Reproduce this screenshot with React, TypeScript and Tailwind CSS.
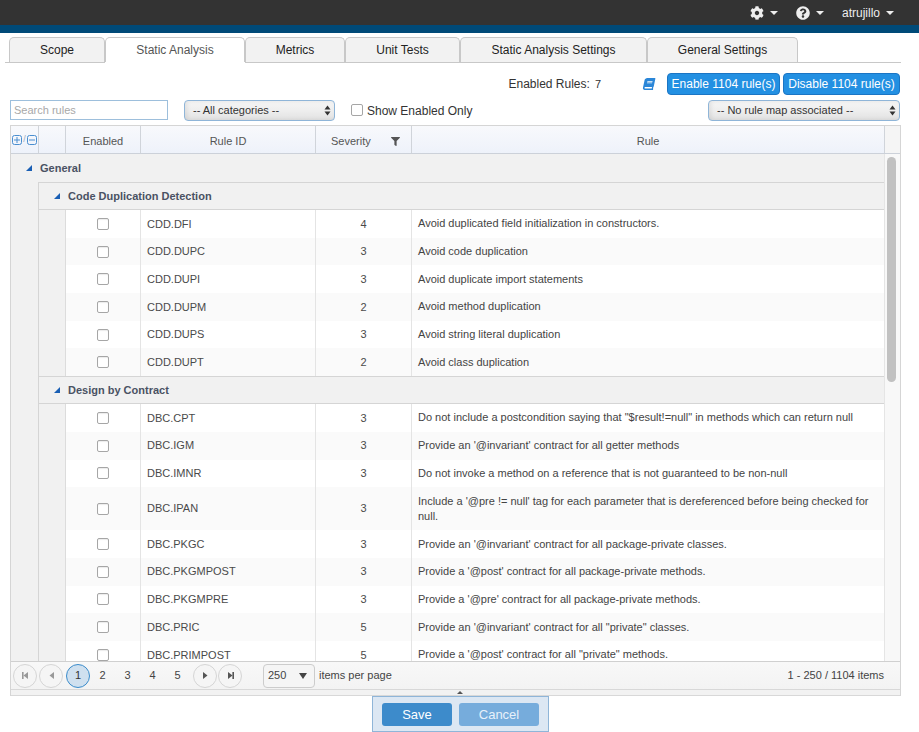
import React from "react";
import { FaCog, FaQuestionCircle, FaBook, FaFilter } from "react-icons/fa";

const tabs = [
  { t: "Scope", w: "w-[96px]" },
  { t: "Static Analysis", w: "w-[140px]", active: true },
  { t: "Metrics", w: "w-[100px]" },
  { t: "Unit Tests", w: "w-[115px]" },
  { t: "Static Analysis Settings", w: "w-[187px]" },
  { t: "General Settings", w: "w-[151px]" },
];

type R = { id: string; sev: number; text: string; h?: string };
const cdd: R[] = [
  { id: "CDD.DFI", sev: 4, text: "Avoid duplicated field initialization in constructors." },
  { id: "CDD.DUPC", sev: 3, text: "Avoid code duplication" },
  { id: "CDD.DUPI", sev: 3, text: "Avoid duplicate import statements" },
  { id: "CDD.DUPM", sev: 2, text: "Avoid method duplication" },
  { id: "CDD.DUPS", sev: 3, text: "Avoid string literal duplication" },
  { id: "CDD.DUPT", sev: 2, text: "Avoid class duplication" },
];
const dbc: R[] = [
  { id: "DBC.CPT", sev: 3, text: "Do not include a postcondition saying that \"$result!=null\" in methods which can return null" },
  { id: "DBC.IGM", sev: 3, text: "Provide an '@invariant' contract for all getter methods" },
  { id: "DBC.IMNR", sev: 3, text: "Do not invoke a method on a reference that is not guaranteed to be non-null" },
  { id: "DBC.IPAN", sev: 3, text: "Include a '@pre != null' tag for each parameter that is dereferenced before being checked for null.", h: "h-[43px]" },
  { id: "DBC.PKGC", sev: 3, text: "Provide an '@invariant' contract for all package-private classes." },
  { id: "DBC.PKGMPOST", sev: 3, text: "Provide a '@post' contract for all package-private methods." },
  { id: "DBC.PKGMPRE", sev: 3, text: "Provide a '@pre' contract for all package-private methods." },
  { id: "DBC.PRIC", sev: 5, text: "Provide an '@invariant' contract for all \"private\" classes." },
  { id: "DBC.PRIMPOST", sev: 5, text: "Provide a '@post' contract for all \"private\" methods." },
];

function Caret() {
  return <span className="ml-[6px] inline-block h-0 w-0 border-x-[4px] border-t-[4px] border-x-transparent border-t-[#eeeeee]" />;
}

function Tri() {
  return (
    <svg width="8" height="8" viewBox="0 0 8 8" className="shrink-0">
      <path d="M7 1V7H1Z" fill="#1a5fb4" />
    </svg>
  );
}

function Check() {
  return <input type="checkbox" className="h-[12px] w-[12px] appearance-none rounded-[2px] border border-[#a6a6a6] bg-white shadow-[inset_0_1px_1px_rgba(0,0,0,0.08)]" />;
}

function Row({ r, alt }: { r: R; alt: boolean }) {
  return (
    <div className={`flex ${r.h ?? "h-[27.7px]"} shrink-0 items-center text-[11px] text-[#4a4a4a] ${alt ? "bg-[#fafafa]" : "bg-white"}`}>
      <div className="flex h-full w-[75px] shrink-0 items-center justify-center border-r border-[#e4e4e4]"><Check /></div>
      <div className="flex h-full w-[175px] shrink-0 items-center border-r border-[#e4e4e4] pl-[6px]">{r.id}</div>
      <div className="flex h-full w-[96px] shrink-0 items-center justify-center border-r border-[#e4e4e4]">{r.sev}</div>
      <div className="flex h-full min-w-0 flex-1 items-center pl-[6px] pr-[7px] leading-[15px] text-[#444]">{r.text}</div>
    </div>
  );
}

function Group({ name, rows }: { name: string; rows: R[] }) {
  return (
    <div className="shrink-0">
      <div className="flex h-[28px] items-center border-t border-b border-[#d5d5d5] bg-[#f1f1f1]">
        <div className="w-[14px]" />
        <Tri />
        <span className="ml-[7px] text-[11px] font-bold text-[#4a5263]">{name}</span>
      </div>
      <div className="ml-[26px] border-l border-[#dcdcdc]">
        {rows.map((r, i) => <Row key={r.id} r={r} alt={i % 2 === 1} />)}
      </div>
    </div>
  );
}

function Sel({ label, w }: { label: string; w: string }) {
  return (
    <div className={`flex h-[21px] ${w} items-center justify-between rounded-[4px] border border-[#8fb5d8] bg-gradient-to-b from-[#f6f6f6] via-[#eeeeee] to-[#e2e2e2] pl-[8px] pr-[3px] text-[11px] text-[#333] shadow-[inset_2px_0_4px_rgba(0,0,0,0.08)]`}>
      <span>{label}</span>
      <svg width="7" height="11" viewBox="0 0 7 11"><path d="M3.5 0.5 6.5 4.5H0.5Z M3.5 10.5 0.5 6.5H6.5Z" fill="#333" /></svg>
    </div>
  );
}

function PagerBtn({ d, bar }: { d: "l" | "r"; bar?: boolean }) {
  const c = d === "l" ? "#999" : "#555";
  return (
    <div className="flex h-[24px] w-[24px] items-center justify-center rounded-full border border-[#d5d5d5] bg-[#f5f5f5]">
      <svg width="9" height="9" viewBox="0 0 9 9">
        {d === "l" ? <path d="M7 1V8L2.5 4.5Z" fill={c} /> : <path d="M2 1V8L6.5 4.5Z" fill={c} />}
        {bar && <rect x={d === "l" ? 1 : 6.4} y="1" width="1.6" height="7" fill={c} />}
      </svg>
    </div>
  );
}

export default function App() {
  return (
    <div className="h-[732px] w-[919px] overflow-hidden bg-white font-['Liberation_Sans',Arial,sans-serif] text-[#333]">
      <div className="flex h-[25px] items-center justify-end bg-[#333333] pr-[25px] text-[12px] text-[#eeeeee]">
        <FaCog className="h-[14px] w-[14px]" /><Caret />
        <FaQuestionCircle className="ml-[18px] h-[14px] w-[14px]" /><Caret />
        <span className="ml-[18px]">atrujillo</span><Caret />
      </div>
      <div className="h-[8px] bg-[#004a78]" />

      <div className="ml-[5px] mt-[4px] flex h-[26px] w-[896px] border-b border-[#c8c8c8] pl-[4px]">
        {tabs.map((t) => (
          <div
            key={t.t}
            className={`${t.w} flex h-[25px] items-center justify-center rounded-t-[5px] border border-b-0 border-[#c8c8c8] text-[12px] ${t.active ? "z-10 bg-white text-[#555] shadow-[0_1px_0_#ffffff]" : "bg-[#f2f2f2] text-[#222]"}`}
          >
            {t.t}
          </div>
        ))}
      </div>

      <div className="mt-[10px] flex h-[22px] items-center justify-end pr-[19px] text-[12px]">
        <span className="text-[#333]">Enabled Rules:</span>
        <span className="ml-[5px] text-[11px] text-[#333]">7</span>
        <FaBook className="ml-[41px] h-[12px] w-[14px] -skew-x-12 text-[#2a86d8]" />
        <div className="ml-[11px] flex h-[22px] w-[113px] items-center justify-center rounded-[4px] border border-[#1b75c4] bg-[#2390e2] text-white">Enable 1104 rule(s)</div>
        <div className="ml-[3px] flex h-[22px] w-[117px] items-center justify-center rounded-[4px] border border-[#1b75c4] bg-[#2390e2] text-white">Disable 1104 rule(s)</div>
      </div>

      <div className="mt-[5px] flex h-[21px] items-start pl-[10px] pr-[19px]">
        <input placeholder="Search rules" className="h-[20px] w-[158px] border border-[#9dbfdc] px-[3px] text-[11px] outline-none placeholder:text-[#a8a8a8]" />
        <Sel label="-- All categories --" w="ml-[16px] w-[151px]" />
        <input type="checkbox" className="ml-[16px] mt-[4px] h-[12px] w-[12px] appearance-none rounded-[2px] border border-[#a6a6a6] bg-white" />
        <span className="ml-[4px] mt-[2px] text-[12px] text-[#333]">Show Enabled Only</span>
        <Sel label="-- No rule map associated --" w="ml-auto w-[192px]" />
      </div>

      <div className="ml-[10px] mt-[4px] w-[891px] border border-b-0 border-[#d5d5d5]">
        <div className="flex h-[28px] border-b border-[#ccd1d9] bg-gradient-to-b from-[#f8f9fc] to-[#eef2fa] text-[11px] text-[#555]">
          <div className="flex w-[28px] shrink-0 items-center justify-center gap-[1px] border-r border-[#d0d4da]">
            <svg width="10" height="10" viewBox="0 0 10 10"><rect x="0.5" y="0.5" width="9" height="9" rx="2" fill="none" stroke="#4a8ecf" /><path d="M2 5H8M5 2V8" stroke="#4a8ecf" /></svg>
            <span className="text-[9px] text-[#9ab]">/</span>
            <svg width="10" height="10" viewBox="0 0 10 10"><rect x="0.5" y="0.5" width="9" height="9" rx="2" fill="none" stroke="#4a8ecf" /><path d="M2 5H8" stroke="#4a8ecf" /></svg>
          </div>
          <div className="w-[27px] shrink-0 border-r border-[#d0d4da]" />
          <div className="flex w-[75px] shrink-0 items-center justify-center border-r border-[#d0d4da] pt-[3px]">Enabled</div>
          <div className="flex w-[175px] shrink-0 items-center justify-center border-r border-[#d0d4da] pt-[3px]">Rule ID</div>
          <div className="flex w-[96px] shrink-0 items-center justify-between border-r border-[#d0d4da] pl-[15px] pr-[11px] pt-[3px]">
            <span>Severity</span>
            <FaFilter className="h-[9px] w-[9px] text-[#555]" />
          </div>
          <div className="flex flex-1 items-center justify-center border-r border-[#d0d4da] pt-[3px]">Rule</div>
          <div className="w-[15px] shrink-0 bg-[#f5f5f5]" />
        </div>

        <div className="flex h-[507px] overflow-hidden">
          <div className="min-w-0 flex-1 overflow-hidden bg-[#f1f1f1]">
            <div className="flex h-[28px] items-center pl-[14px] text-[11px] font-bold text-[#4a5263]">
              <Tri />
              <span className="ml-[7px]">General</span>
            </div>
            <div className="ml-[27px] flex flex-col border-l border-[#d5d5d5]">
              <Group name="Code Duplication Detection" rows={cdd} />
              <Group name="Design by Contract" rows={dbc} />
            </div>
          </div>
          <div className="w-[16px] shrink-0 border-l border-[#e5e5e5] bg-[#f8f8f8] px-[2px] pt-[3px]">
            <div className="h-[225px] w-[9px] rounded-full bg-[#c1c1c1]" />
          </div>
        </div>

        <div className="flex h-[28px] items-center border-t border-[#d0d0d0] bg-gradient-to-b from-[#f8f8f8] to-[#f3f3f3] pl-[2px] pr-[16px] text-[11px] text-[#444]">
          <PagerBtn d="l" bar />
          <div className="ml-[2px]"><PagerBtn d="l" /></div>
          <div className="ml-[3px] flex h-[24px] w-[24px] items-center justify-center rounded-full border border-[#3b8ccb] bg-[#cfe0ef] text-[#333]">1</div>
          <div className="flex w-[25px] justify-center">2</div>
          <div className="flex w-[25px] justify-center">3</div>
          <div className="flex w-[25px] justify-center">4</div>
          <div className="flex w-[25px] justify-center">5</div>
          <div className="ml-[3px]"><PagerBtn d="r" /></div>
          <div className="ml-[1px]"><PagerBtn d="r" bar /></div>
          <div className="ml-[21px] flex h-[24px] w-[52px] items-center justify-between rounded-[4px] border border-[#ccc] bg-[#f5f5f5] pl-[4px] pr-[7px]">
            <span>250</span>
            <span className="inline-block h-0 w-0 border-x-[4px] border-t-[6px] border-x-transparent border-t-[#444]" />
          </div>
          <span className="ml-[4px]">items per page</span>
          <span className="ml-auto">1 - 250 / 1104 items</span>
        </div>
        <div className="relative h-[7px] border-y border-[#d8d8d8] bg-[#f2f2f2]">
          <span className="absolute left-[446px] top-[1px] h-0 w-0 border-x-[3px] border-b-[3px] border-x-transparent border-b-[#555]" />
        </div>
      </div>

      <div className="ml-[372px] flex h-[36px] w-[177px] items-center justify-center gap-[7px] border border-[#8fb5d8] bg-[#dce7f3] pt-[1px]">
        <div className="flex h-[23px] w-[70px] items-center justify-center rounded-[3px] bg-[#3d8bcb] text-[13px] text-white">Save</div>
        <div className="flex h-[23px] w-[80px] items-center justify-center rounded-[3px] bg-[#76acdc] text-[13px] text-[#e8f1fa]">Cancel</div>
      </div>
    </div>
  );
}
